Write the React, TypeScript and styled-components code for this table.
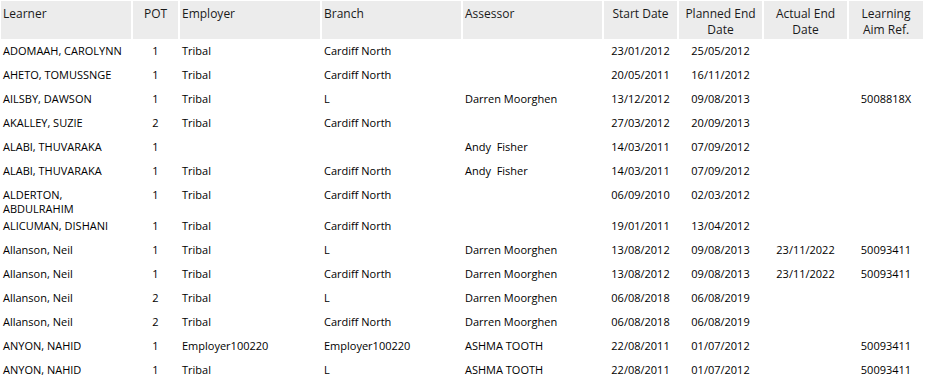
import React from "react";
import styled, { createGlobalStyle } from "styled-components";

const GlobalStyle = createGlobalStyle`
  html, body {
    margin: 0;
    padding: 0;
    background: #ffffff;
  }
  body {
    font-family: "Open Sans", "Noto Sans", sans-serif;
    color: #000000;
  }
`;

type Align = "left" | "center";

interface Column {
  key: string;
  title: string;
  width: number;
  align: Align;
}

const columns: Column[] = [
  { key: "learner", title: "Learner", width: 130, align: "left" },
  { key: "pot", title: "POT", width: 45, align: "center" },
  { key: "employer", title: "Employer", width: 140, align: "left" },
  { key: "branch", title: "Branch", width: 139, align: "left" },
  { key: "assessor", title: "Assessor", width: 139, align: "left" },
  { key: "start", title: "Start Date", width: 73, align: "center" },
  { key: "planned", title: "Planned End Date", width: 83, align: "center" },
  { key: "actual", title: "Actual End Date", width: 83, align: "center" },
  { key: "aim", title: "Learning Aim Ref.", width: 74, align: "center" },
];

type Row = Record<string, string>;

const rows: Row[] = [
  { learner: "ADOMAAH, CAROLYNN", pot: "1", employer: "Tribal", branch: "Cardiff North", assessor: "", start: "23/01/2012", planned: "25/05/2012", actual: "", aim: "" },
  { learner: "AHETO, TOMUSSNGE", pot: "1", employer: "Tribal", branch: "Cardiff North", assessor: "", start: "20/05/2011", planned: "16/11/2012", actual: "", aim: "" },
  { learner: "AILSBY, DAWSON", pot: "1", employer: "Tribal", branch: "L", assessor: "Darren Moorghen", start: "13/12/2012", planned: "09/08/2013", actual: "", aim: "5008818X" },
  { learner: "AKALLEY, SUZIE", pot: "2", employer: "Tribal", branch: "Cardiff North", assessor: "", start: "27/03/2012", planned: "20/09/2013", actual: "", aim: "" },
  { learner: "ALABI, THUVARAKA", pot: "1", employer: "", branch: "", assessor: "Andy  Fisher", start: "14/03/2011", planned: "07/09/2012", actual: "", aim: "" },
  { learner: "ALABI, THUVARAKA", pot: "1", employer: "Tribal", branch: "Cardiff North", assessor: "Andy  Fisher", start: "14/03/2011", planned: "07/09/2012", actual: "", aim: "" },
  { learner: "ALDERTON, ABDULRAHIM", pot: "1", employer: "Tribal", branch: "Cardiff North", assessor: "", start: "06/09/2010", planned: "02/03/2012", actual: "", aim: "" },
  { learner: "ALICUMAN, DISHANI", pot: "1", employer: "Tribal", branch: "Cardiff North", assessor: "", start: "19/01/2011", planned: "13/04/2012", actual: "", aim: "" },
  { learner: "Allanson, Neil", pot: "1", employer: "Tribal", branch: "L", assessor: "Darren Moorghen", start: "13/08/2012", planned: "09/08/2013", actual: "23/11/2022", aim: "50093411" },
  { learner: "Allanson, Neil", pot: "1", employer: "Tribal", branch: "Cardiff North", assessor: "Darren Moorghen", start: "13/08/2012", planned: "09/08/2013", actual: "23/11/2022", aim: "50093411" },
  { learner: "Allanson, Neil", pot: "2", employer: "Tribal", branch: "L", assessor: "Darren Moorghen", start: "06/08/2018", planned: "06/08/2019", actual: "", aim: "" },
  { learner: "Allanson, Neil", pot: "2", employer: "Tribal", branch: "Cardiff North", assessor: "Darren Moorghen", start: "06/08/2018", planned: "06/08/2019", actual: "", aim: "" },
  { learner: "ANYON, NAHID", pot: "1", employer: "Employer100220", branch: "Employer100220", assessor: "ASHMA TOOTH", start: "22/08/2011", planned: "01/07/2012", actual: "", aim: "50093411" },
  { learner: "ANYON, NAHID", pot: "1", employer: "Tribal", branch: "L", assessor: "ASHMA TOOTH", start: "22/08/2011", planned: "01/07/2012", actual: "", aim: "50093411" },
];

const gridTemplate = columns.map((c) => `${c.width}px`).join(" ");

const Grid = styled.div`
  width: 929px;
  padding-top: 1px;
`;

const HeaderRow = styled.div`
  display: grid;
  grid-template-columns: ${gridTemplate};
  column-gap: 2px;
  padding-left: 1px;
`;

const HeaderCell = styled.div<{ $align: Align }>`
  background: #ececec;
  height: 38px;
  box-sizing: border-box;
  padding: 5px 2px 0;
  font-size: 12px;
  line-height: 16px;
  color: #1a1a1a;
  text-align: ${(p) => p.$align};
`;

const DataRow = styled.div`
  display: grid;
  grid-template-columns: ${gridTemplate};
  column-gap: 2px;
  padding-left: 1px;
  min-height: 24px;
`;

const DataCell = styled.div<{ $align: Align }>`
  box-sizing: border-box;
  padding: 5px 2px 0;
  margin-bottom: -2px;
  font-size: 11px;
  line-height: 14px;
  white-space: pre-wrap;
  text-align: ${(p) => p.$align};
`;

export default function App() {
  return (
    <>
      <GlobalStyle />
      <Grid>
        <HeaderRow>
          {columns.map((c) => (
            <HeaderCell key={c.key} $align={c.align}>
              {c.title}
            </HeaderCell>
          ))}
        </HeaderRow>
        {rows.map((r, i) => (
          <DataRow key={i}>
            {columns.map((c) => (
              <DataCell key={c.key} $align={c.align}>
                {r[c.key]}
              </DataCell>
            ))}
          </DataRow>
        ))}
      </Grid>
    </>
  );
}
